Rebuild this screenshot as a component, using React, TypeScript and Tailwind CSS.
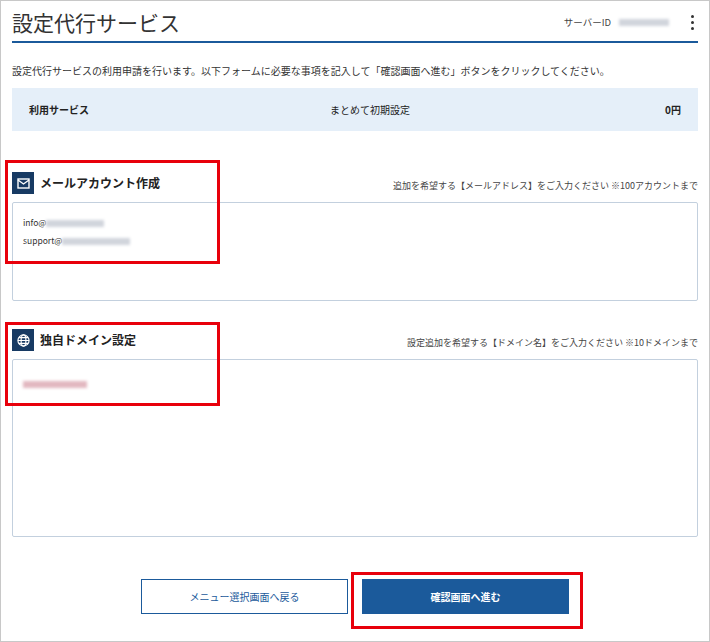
const font = { fontFamily: '"Noto Sans CJK JP", "Liberation Sans", sans-serif' };

const Blur = ({ w, c = "bg-gray-300" }: { w: string; c?: string }) => (
  <span className={`inline-block h-[7px] align-middle blur-[1.5px] ${w} ${c}`} />
);

export default function App() {
  return (
    <div style={font} className="relative w-[710px] h-[642px] border border-[#c8c8c8] bg-white text-[#222] px-[11px]">
      {/* Header */}
      <div className="flex items-center justify-between h-[42px] pt-[2px] border-b-2 border-[#1b5a9b]">
        <h1 className="text-[21px] leading-none text-[#333]">設定代行サービス</h1>
        <div className="flex items-center gap-2 text-[9.5px] text-[#444]">
          <span>サーバーID</span>
          <Blur w="w-[50px]" />
          <span className="ml-[14px] mr-[4px] flex flex-col gap-[3px]">
            <span className="w-[3px] h-[3px] bg-[#333] rounded-full" />
            <span className="w-[3px] h-[3px] bg-[#333] rounded-full" />
            <span className="w-[3px] h-[3px] bg-[#333] rounded-full" />
          </span>
        </div>
      </div>

      <p className="text-[10px] mt-[20px] text-[#333]">
        設定代行サービスの利用申請を行います。以下フォームに必要な事項を記入して「確認画面へ進む」ボタンをクリックしてください。
      </p>

      <div className="mt-[10px] h-[43px] bg-[#e5eff9] grid grid-cols-3 items-center px-[17px] text-[10px]">
        <span className="font-bold">利用サービス</span>
        <span className="text-center ml-[30px]">まとめて初期設定</span>
        <span className="text-right font-bold">0円</span>
      </div>

      {/* Mail */}
      <div className="mt-[41px] flex items-end justify-between">
        <div className="flex items-center gap-[6px]">
          <span className="w-[22px] h-[22px] bg-[#173a63] flex items-center justify-center">
            <svg width="13" height="11" viewBox="0 0 13 11" fill="none" stroke="white" strokeWidth="1.4">
              <rect x="1" y="1" width="11" height="9" />
              <path d="M1 2l5.5 4L12 2" />
            </svg>
          </span>
          <span className="text-[12px] font-bold">メールアカウント作成</span>
        </div>
        <span className="text-[9px] text-[#444] mb-[2px]">追加を希望する【メールアドレス】をご入力ください ※100アカウントまで</span>
      </div>
      <div className="mt-[8px] h-[99px] border border-[#c3d0de] rounded-[2px] px-[10px] pt-[10px] font-['DejaVu_Sans_Mono'] text-[8.5px] leading-[18px] text-[#333]">
        <div>info@<Blur w="w-[58px]" /></div>
        <div>support@<Blur w="w-[68px]" /></div>
      </div>

      {/* Domain */}
      <div className="mt-[28px] flex items-end justify-between">
        <div className="flex items-center gap-[6px]">
          <span className="w-[22px] h-[22px] bg-[#173a63] flex items-center justify-center">
            <svg width="13" height="13" viewBox="0 0 14 14" fill="none" stroke="white" strokeWidth="1.3">
              <circle cx="7" cy="7" r="6" />
              <ellipse cx="7" cy="7" rx="2.6" ry="6" />
              <path d="M1 7h12M2 4h10M2 10h10" />
            </svg>
          </span>
          <span className="text-[12px] font-bold">独自ドメイン設定</span>
        </div>
        <span className="text-[9px] text-[#444] mb-[2px]">設定追加を希望する【ドメイン名】をご入力ください ※10ドメインまで</span>
      </div>
      <div className="mt-[8px] h-[178px] border border-[#c3d0de] rounded-[2px] px-[10px] pt-[10px]">
        <Blur w="w-[64px]" c="bg-[#e2b8c0]" />
      </div>

      {/* Buttons */}
      <div className="mt-[42px] flex justify-center gap-[14px]">
        <button className="w-[207px] h-[35px] border border-[#1b5a9b] text-[#1b5a9b] text-[10px] bg-white">メニュー選択画面へ戻る</button>
        <button className="w-[207px] h-[35px] bg-[#1b5a9b] text-white text-[10px] font-bold">確認画面へ進む</button>
      </div>

      {/* Highlights */}
      <div className="absolute left-[4px] top-[159px] w-[215px] h-[104px] border-[3px] border-[#e8000b]" />
      <div className="absolute left-[4px] top-[321px] w-[215px] h-[84px] border-[3px] border-[#e8000b]" />
      <div className="absolute left-[350px] top-[571px] w-[232px] h-[57px] border-[3px] border-[#e8000b]" />
    </div>
  );
}
